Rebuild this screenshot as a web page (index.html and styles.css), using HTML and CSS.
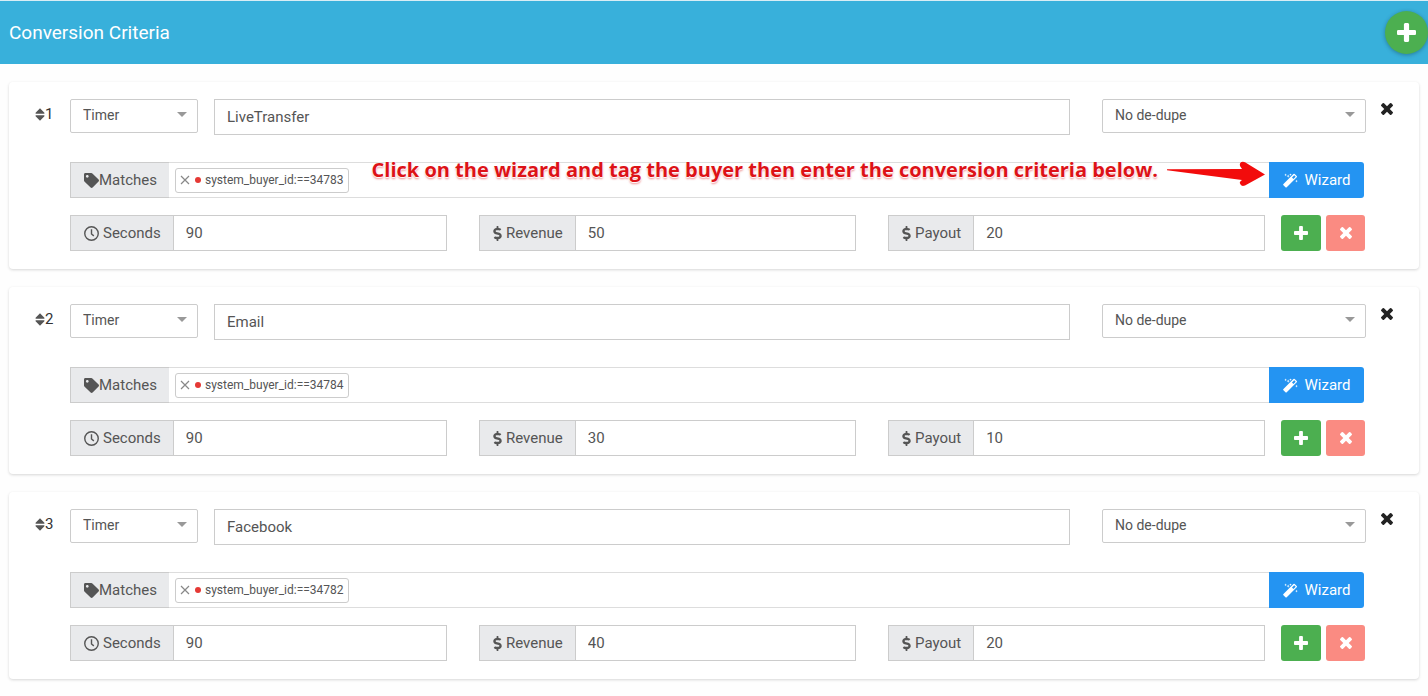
FILE: index.html
```
<!DOCTYPE html>
<html lang="en">
<head>
	<meta charset="UTF-8">
	<meta name="viewport" content="width=device-width, initial-scale=1">
	<title>Conversion Criteria</title>
	<link rel="stylesheet" href="styles.css">
</head>
<body>
	<!-- icons -->
	<svg class="sprite" width="0" height="0">
		<symbol id="plus" viewBox="192 128 1408 1408">
			<path d="M1600 736v192q0 40-28 68t-68 28h-416v416q0 40-28 68t-68 28h-192q-40 0-68-28t-28-68v-416h-416q-40 0-68-28t-28-68v-192q0-40 28-68t68-28h416v-416q0-40 28-68t68-28h192q40 0 68 28t28 68v416h416q40 0 68 28t28 68z"/>
		</symbol>
		<symbol id="times" viewBox="302 366 1188 1188">
			<path d="M1490 1322q0 40-28 68l-136 136q-28 28-68 28t-68-28l-294-294-294 294q-28 28-68 28t-68-28l-136-136q-28-28-28-68t28-68l294-294-294-294q-28-28-28-68t28-68l136-136q28-28 68-28t68 28l294 294 294-294q28-28 68-28t68 28l136 136q28 28 28 68t-28 68l-294 294 294 294q28 28 28 68z"/>
		</symbol>
		<symbol id="sort" viewBox="0 0 10 13">
			<path d="M5 .3 9.4 4.8q.5.9-.5.9H1.100q-1 0-.5-.9zM5 12.700 9.400 8.200q.5-.9-.5-.9H1.100q-1 0-.5.9z"/>
		</symbol>
		<symbol id="tag" viewBox="0 0 512 512">
			<path d="M0 252.118V48C0 21.49 21.49 0 48 0h204.118a48 48 0 0 1 33.941 14.059l211.882 211.882c18.745 18.745 18.745 49.137 0 67.882L293.823 497.941c-18.745 18.745-49.137 18.745-67.882 0L14.059 286.059A48 48 0 0 1 0 252.118zM112 64c-26.51 0-48 21.49-48 48s21.49 48 48 48 48-21.49 48-48-21.49-48-48-48z"/>
		</symbol>
		<symbol id="clock" viewBox="0 0 16 16">
			<path d="M8 3.500v5l2.500 2M15.200 8A7.200 7.200 0 1 1 .8 8a7.200 7.200 0 0 1 14.400 0z" fill="none" stroke="currentColor" stroke-width="1.500"/>
		</symbol>
		<symbol id="dollar" viewBox="0 0 288 512">
			<path d="M209.2 233.4l-108-31.6C88.7 198.2 80 186.5 80 173.5c0-16.3 13.2-29.5 29.5-29.5h66.3c12.2 0 24.2 3.7 34.2 10.5 6.1 4.1 14.3 3.1 19.5-2l34.8-34c7.1-6.9 6.1-18.4-1.8-24.5C238 74.8 207.4 64.1 176 64V16c0-8.8-7.2-16-16-16h-32c-8.8 0-16 7.2-16 16v48h-2.5C45.8 64-5.4 118.7.5 183.6c4.2 46.1 39.4 83.6 83.8 96.6l102.5 30c12.5 3.7 21.2 15.3 21.2 28.3 0 16.3-13.2 29.5-29.5 29.5h-66.3C100 368 88 364.3 78 357.5c-6.1-4.1-14.3-3.1-19.5 2l-34.8 34c-7.1 6.9-6.1 18.4 1.8 24.5 24.5 19.2 55.1 29.9 86.5 30v48c0 8.8 7.2 16 16 16h32c8.8 0 16-7.2 16-16v-48.2c46.6-.9 90.3-28.6 105.7-72.7 21.5-61.6-14.6-124.8-72.5-141.7z"/>
		</symbol>
		<symbol id="cross" viewBox="0 0 10 10">
			<path d="M1 1l8 8M9 1l-8 8" stroke="currentColor" stroke-width="1.200"/>
		</symbol>
		<symbol id="wand" viewBox="0 0 16 16">
			<path fill-rule="evenodd" d="M.5 11.700 11.100 1.100q.7-.7 1.400 0l2.100 2.100q.7.7 0 1.400L4 15.200q-.7.7-1.400 0L.5 13.100q-.7-.7 0-1.400zM9.600 4.800l1.500 1.500 2.400-2.400L12 2.400z"/>
			<path d="M2.800.6l.4 1 1 .4-1 .4-.4 1-.4-1-1-.4 1-.4zM5.500 1.500l.5 1.300 1.300.5-1.300.5-.5 1.300-.5-1.300-1.300-.5 1.300-.5zM8 .4l.4 1 1 .4-1 .4-.4 1-.4-1-1-.4 1-.4zM14.400 7.200l.4 1 1 .4-1 .4-.4 1-.4-1-1-.4 1-.4z"/>
		</symbol>
	</svg>

	<header class="topbar">
		<h1>Conversion Criteria</h1>
		<button class="add_btn" type="button" aria-label="Add criteria"><svg class="icon"><use href="#plus"/></svg></button>
	</header>

	<main class="criteria_list">
		<section class="card">
			<div class="order"><svg class="icon sort"><use href="#sort"/></svg>1</div>
			<div class="fields">
				<div class="row row_top">
					<div class="select type"><select aria-label="Type"><option>Timer</option></select></div>
					<input class="name" type="text" value="LiveTransfer" aria-label="Name">
					<div class="select dedupe"><select aria-label="De-dupe"><option>No de-dupe</option></select></div>
				</div>
				<div class="row row_matches">
					<div class="group">
						<label class="addon" for="matches1"><svg class="icon big"><use href="#tag"/></svg>Matches</label>
						<div class="tags">
							<span class="chip"><button type="button" aria-label="Remove"><svg class="icon"><use href="#cross"/></svg></button><i class="dot"></i>system_buyer_id:==34783</span>
							<input id="matches1" type="text">
							<!-- help note pointing at the wizard button -->
							<div class="note">
								<span>Click on the wizard and tag the buyer then enter the conversion criteria below.</span>
								<svg class="arrow" viewBox="0 0 100 26"><path d="M1 8.200 76 8 74 5Q73 1 77 .8L79 1.200 99 13.500 79 24.500Q75 26 74 22.500 73 21 76 19L1 9.200z"/></svg>
							</div>
						</div>
						<button class="wizard" type="button"><svg class="icon big"><use href="#wand"/></svg>Wizard</button>
					</div>
				</div>
				<div class="row row_values">
					<div class="group">
						<label class="addon spaced" for="seconds1"><svg class="icon big"><use href="#clock"/></svg>Seconds</label>
						<input id="seconds1" type="text" value="90">
					</div>
					<div class="group">
						<label class="addon spaced" for="revenue1"><svg class="icon dollar"><use href="#dollar"/></svg>Revenue</label>
						<input id="revenue1" type="text" value="50">
					</div>
					<div class="group">
						<label class="addon spaced" for="payout1"><svg class="icon dollar"><use href="#dollar"/></svg>Payout</label>
						<input id="payout1" type="text" value="20">
					</div>
					<div class="actions">
						<button class="btn green" type="button" aria-label="Add"><svg class="icon"><use href="#plus"/></svg></button>
						<button class="btn red" type="button" aria-label="Remove"><svg class="icon"><use href="#times"/></svg></button>
					</div>
				</div>
			</div>
			<button class="close" type="button" aria-label="Delete criteria"><svg class="icon"><use href="#times"/></svg></button>
		</section>

		<section class="card">
			<div class="order"><svg class="icon sort"><use href="#sort"/></svg>2</div>
			<div class="fields">
				<div class="row row_top">
					<div class="select type"><select aria-label="Type"><option>Timer</option></select></div>
					<input class="name" type="text" value="Email" aria-label="Name">
					<div class="select dedupe"><select aria-label="De-dupe"><option>No de-dupe</option></select></div>
				</div>
				<div class="row row_matches">
					<div class="group">
						<label class="addon" for="matches2"><svg class="icon big"><use href="#tag"/></svg>Matches</label>
						<div class="tags">
							<span class="chip"><button type="button" aria-label="Remove"><svg class="icon"><use href="#cross"/></svg></button><i class="dot"></i>system_buyer_id:==34784</span>
							<input id="matches2" type="text">
						</div>
						<button class="wizard" type="button"><svg class="icon big"><use href="#wand"/></svg>Wizard</button>
					</div>
				</div>
				<div class="row row_values">
					<div class="group">
						<label class="addon spaced" for="seconds2"><svg class="icon big"><use href="#clock"/></svg>Seconds</label>
						<input id="seconds2" type="text" value="90">
					</div>
					<div class="group">
						<label class="addon spaced" for="revenue2"><svg class="icon dollar"><use href="#dollar"/></svg>Revenue</label>
						<input id="revenue2" type="text" value="30">
					</div>
					<div class="group">
						<label class="addon spaced" for="payout2"><svg class="icon dollar"><use href="#dollar"/></svg>Payout</label>
						<input id="payout2" type="text" value="10">
					</div>
					<div class="actions">
						<button class="btn green" type="button" aria-label="Add"><svg class="icon"><use href="#plus"/></svg></button>
						<button class="btn red" type="button" aria-label="Remove"><svg class="icon"><use href="#times"/></svg></button>
					</div>
				</div>
			</div>
			<button class="close" type="button" aria-label="Delete criteria"><svg class="icon"><use href="#times"/></svg></button>
		</section>

		<section class="card">
			<div class="order"><svg class="icon sort"><use href="#sort"/></svg>3</div>
			<div class="fields">
				<div class="row row_top">
					<div class="select type"><select aria-label="Type"><option>Timer</option></select></div>
					<input class="name" type="text" value="Facebook" aria-label="Name">
					<div class="select dedupe"><select aria-label="De-dupe"><option>No de-dupe</option></select></div>
				</div>
				<div class="row row_matches">
					<div class="group">
						<label class="addon" for="matches3"><svg class="icon big"><use href="#tag"/></svg>Matches</label>
						<div class="tags">
							<span class="chip"><button type="button" aria-label="Remove"><svg class="icon"><use href="#cross"/></svg></button><i class="dot"></i>system_buyer_id:==34782</span>
							<input id="matches3" type="text">
						</div>
						<button class="wizard" type="button"><svg class="icon big"><use href="#wand"/></svg>Wizard</button>
					</div>
				</div>
				<div class="row row_values">
					<div class="group">
						<label class="addon spaced" for="seconds3"><svg class="icon big"><use href="#clock"/></svg>Seconds</label>
						<input id="seconds3" type="text" value="90">
					</div>
					<div class="group">
						<label class="addon spaced" for="revenue3"><svg class="icon dollar"><use href="#dollar"/></svg>Revenue</label>
						<input id="revenue3" type="text" value="40">
					</div>
					<div class="group">
						<label class="addon spaced" for="payout3"><svg class="icon dollar"><use href="#dollar"/></svg>Payout</label>
						<input id="payout3" type="text" value="20">
					</div>
					<div class="actions">
						<button class="btn green" type="button" aria-label="Add"><svg class="icon"><use href="#plus"/></svg></button>
						<button class="btn red" type="button" aria-label="Remove"><svg class="icon"><use href="#times"/></svg></button>
					</div>
				</div>
			</div>
			<button class="close" type="button" aria-label="Delete criteria"><svg class="icon"><use href="#times"/></svg></button>
		</section>
	</main>
</body>
</html>
```

FILE: styles.css
```
* {
	box-sizing: border-box;
}
body {
	margin: 0;
	border-top: 1px solid #d9edf5;
	background: #fefefe;
	color: #555;
	font-family: Roboto, "Liberation Sans", sans-serif;
	font-size: 15px;
}
input, select, button {
	font: inherit;
	color: inherit;
}
button {
	display: flex;
	align-items: center;
	justify-content: center;
	padding: 0;
	border: none;
	background: none;
	cursor: pointer;
}
.sprite {
	position: absolute;
}
.icon {
	display: block;
	flex: none;
	width: 12px;
	height: 12px;
	fill: currentColor;
}
.icon.big {
	width: 15px;
	height: 15px;
}
.icon.dollar {
	width: 9px;
	height: 15px;
}
.icon.sort {
	width: 10px;
	height: 13px;
	color: #555;
}

/* top bar */
.topbar {
	display: flex;
	align-items: center;
	justify-content: space-between;
	height: 63px;
	padding-left: 9px;
	background: #38b0db;
	color: #fff;
}
.topbar h1 {
	margin: 0;
	font-size: 19px;
	font-weight: 400;
}
.add_btn {
	width: 43px;
	height: 43px;
	border-radius: 50%;
	background: #4caf50;
	box-shadow: 0 1px 4px rgba(0,0,0,0.3);
}
.add_btn .icon {
	width: 19px;
	height: 19px;
}

/* cards */
.criteria_list {
	display: flex;
	flex-direction: column;
	gap: 18px;
	padding: 18px 9px 9px;
}
.card {
	display: flex;
	align-items: flex-start;
	padding: 17px 26px 18px;
	border-radius: 4px;
	background: #fff;
	box-shadow: 0 1px 3px rgba(0,0,0,0.16);
}
.order {
	display: flex;
	align-items: center;
	width: 35px;
	height: 30px;
	color: #333;
}
.fields {
	flex: 1;
	min-width: 0;
}
.close {
	width: 12px;
	height: 20px;
	margin-left: 15px;
	color: #222;
}
.row {
	display: flex;
	align-items: flex-start;
}
.row_top {
	margin-bottom: 27px;
}
.row_matches {
	margin-bottom: 17px;
	padding-right: 2px;
}
.row input {
	min-width: 0;
	height: 36px;
	padding: 0 12px;
	border: 1px solid #ccc;
	background: #fff;
}
.row .name {
	flex: 1;
	margin: 0 32px 0 16px;
}
.select {
	position: relative;
}
.select select {
	appearance: none;
	width: 100%;
	height: 34px;
	padding: 0 28px 2px 12px;
	border: 1px solid #ccc;
	border-radius: 2px;
	background: #fff;
	font-size: 14px;
}
.select::after {
	content: "";
	position: absolute;
	top: 13px;
	right: 11px;
	border: 5px solid transparent;
	border-top-color: #999;
	border-bottom: none;
	pointer-events: none;
}
.type {
	width: 128px;
}
.dedupe {
	width: 264px;
}

/* input groups */
.group {
	display: flex;
	flex: 1;
	min-width: 0;
}
.group > input {
	flex: 1;
}
.addon {
	display: flex;
	align-items: center;
	height: 36px;
	padding: 0 12px 0 13px;
	border: 1px solid #ccc;
	border-right: none;
	background: #e9eaec;
}
.spaced {
	gap: 4px;
}
.tags {
	position: relative;
	display: flex;
	flex: 1;
	align-items: center;
	height: 36px;
	padding-left: 6px;
	border: 1px solid #ddd;
	border-width: 1px 0;
}
.tags input {
	flex: 1;
	height: 30px;
	border: none;
}
.chip {
	display: flex;
	align-items: center;
	height: 25px;
	padding: 0 4px;
	border: 1px solid #ccc;
	border-radius: 3px;
	background: #fff;
	font-size: 12px;
}
.chip .icon {
	width: 10px;
	height: 10px;
	color: #888;
}
.dot {
	width: 6px;
	height: 6px;
	margin: 0 4px 0 5px;
	border-radius: 50%;
	background: #e53935;
}
.wizard {
	gap: 7px;
	width: 95px;
	height: 36px;
	border-radius: 0 3px 3px 0;
	background: #2494f2;
	color: #fff;
}
.row_values .group {
	margin-right: 32px;
}
.row_values .group:nth-child(3) {
	margin-right: 16px;
}
.actions {
	display: flex;
	gap: 5px;
	padding-right: 1px;
}
.btn {
	width: 40px;
	height: 36px;
	border-radius: 3px;
	color: #fff;
}
.green {
	background: #4caf50;
}
.green .icon {
	width: 14px;
	height: 14px;
}
.red {
	width: 39px;
	background: #fa8b82;
}

/* help note over the matches field */
.note {
	position: absolute;
	top: -10px;
	right: 3px;
	display: flex;
	align-items: center;
	gap: 8px;
	color: #dd1217;
	font-family: "Open Sans", "Noto Sans", sans-serif;
	font-size: 20px;
	font-weight: 700;
	line-height: 28px;
	white-space: nowrap;
	text-shadow: 0 0 2px #fff, 0 1px 1px #fff, 0 2px 2px rgba(221,18,23,0.5);
	pointer-events: none;
}
.arrow {
	width: 100px;
	height: 26px;
	margin-top: 8px;
	fill: #f20c0c;
}
```
